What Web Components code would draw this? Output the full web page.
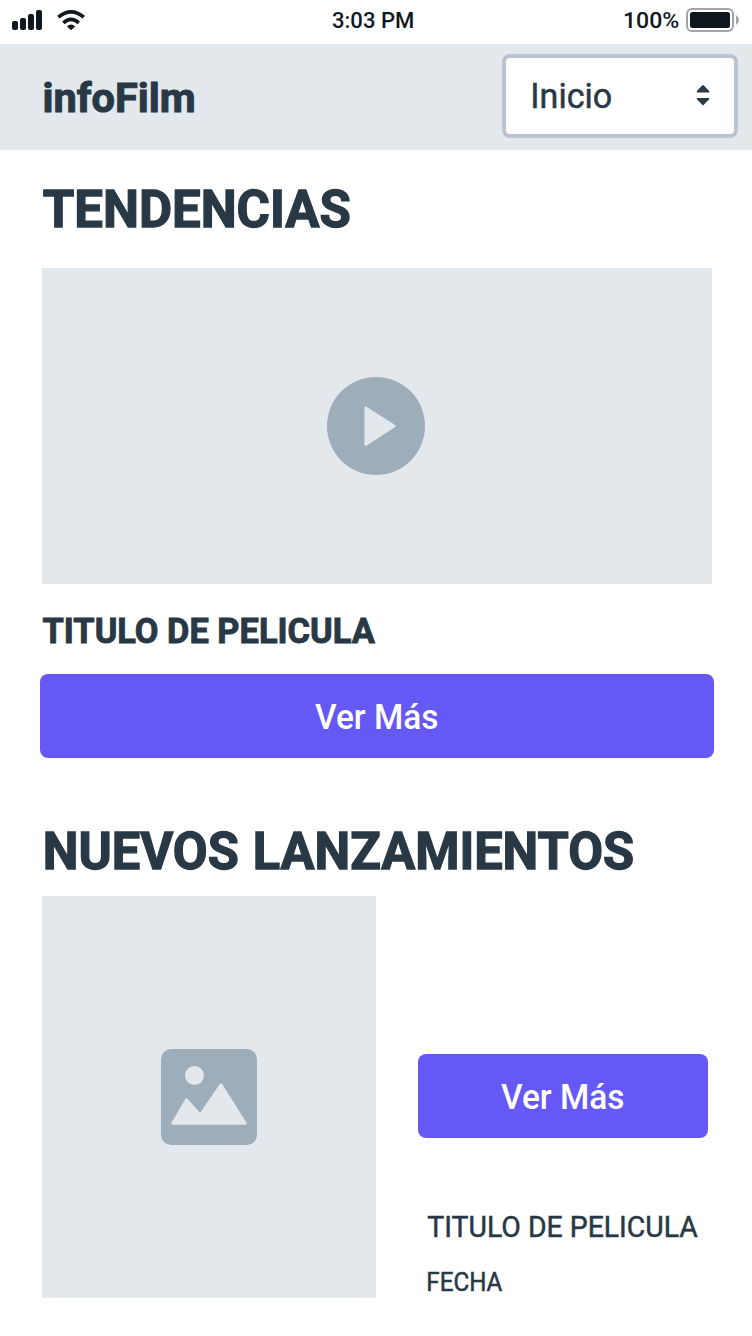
<!DOCTYPE html>
<html lang="es">
<head>
<meta charset="utf-8">
<title>infoFilm</title>
<style>
html,body{margin:0;background:#fff}
body{width:752px;height:1336px;overflow:hidden;font-family:Roboto,"Liberation Sans",sans-serif;color:#293845}
</style>
</head>
<body>
<info-film-app></info-film-app>
<script>
const define = (name, html) => customElements.define(name, class extends HTMLElement {
  constructor() {
    super();
    const t = document.createElement('template');
    t.innerHTML = html;
    this.attachShadow({mode: 'open'}).append(t.content.cloneNode(true));
  }
});

/* A label condensed to a given ink width; its box runs from cap top to baseline. */
customElements.define('fit-label', class extends HTMLElement {
  constructor() {
    super();
    this.attachShadow({mode: 'open'}).innerHTML = `<style>
      :host{display:block;flex:none;white-space:nowrap}
      span{display:block;width:max-content;transform-origin:0 50%}
    </style><span><slot></slot></span>`;
  }
  connectedCallback() {
    const size = +this.getAttribute('size'), weight = this.getAttribute('weight') || 400;
    const stroke = +this.getAttribute('stroke') || 0, gap = (+this.getAttribute('gap') || 0) + 'px';
    const width = +this.getAttribute('width'), cap = Math.round(size * .711);
    const ctx = document.createElement('canvas').getContext('2d');
    ctx.font = `${weight} ${size}px Roboto, "Liberation Sans", sans-serif`;
    ctx.wordSpacing = gap;
    const m = ctx.measureText(this.textContent);
    const k = (width - stroke) / (m.actualBoundingBoxRight + m.actualBoundingBoxLeft);
    this.style.cssText = `width:${width}px;height:${cap}px;font-size:${size}px;font-weight:${weight};line-height:${cap}px;word-spacing:${gap}`;
    const span = this.shadowRoot.querySelector('span');
    span.style.transform = `translate(${m.actualBoundingBoxLeft * k + stroke / 2}px, .0137em) scaleX(${k})`;
    if (stroke) span.style.webkitTextStroke = `${stroke}px currentColor`;
  }
});

define('status-bar', `<style>
  :host{display:grid;grid-template-columns:1fr auto 1fr;height:44px;color:#0f181f;box-sizing:border-box;padding:0 12px}
  div{display:flex;align-items:flex-start}
  .time{padding-top:12px;margin:0 3px 0 -3px}
  .right{justify-content:flex-end}
  .right fit-label{margin:12px 7.3px 0 0}
  svg{display:block;flex:none}
</style>
<div><svg width="76" height="32" viewBox="12 0 76 32" fill="currentColor">
  <rect x="12" y="21" width="6" height="9" rx="2"/><rect x="20" y="18" width="6" height="12" rx="2"/><rect x="28" y="14" width="6" height="16" rx="2"/><rect x="36" y="10" width="6" height="20" rx="2"/>
  <g fill="none" stroke="currentColor" stroke-width="3.6"><path d="M58.4 17.2Q71 6.4 83.8 17.2"/><path d="M63.4 22.8Q71 16 78.8 22.8"/></g>
  <path d="M67 26.4Q71 22.8 75.2 26.4L71.1 30.2Z"/></svg></div>
<div class="time"><fit-label size="22.5" weight="500" width="81.7">3:03 PM</fit-label></div>
<div class="right"><fit-label size="22.5" weight="500" width="54.7">100%</fit-label>
<svg width="54" height="34" viewBox="686 0 54 34"><rect x="687" y="9" width="46" height="22" rx="5" fill="none" stroke="#a0a4a8" stroke-width="2"/><rect x="690" y="12" width="40" height="16" rx="2.5" fill="#0f181f"/><path d="M736 15Q742 20 736 25Z" fill="#a0a4a8"/></svg></div>`);

define('nav-select', `<style>
  :host{display:flex;box-sizing:border-box;width:236px;height:84px;border:4px solid #bac4d0;border-radius:8px;background:#fff;justify-content:space-between;padding:26px 24px 0 26.6px}
  svg{display:block;margin-top:1px}
</style><slot></slot><svg width="14" height="22" viewBox="0 0 14 22" fill="#293845"><path d="M1.3 7.4Q.2 7.2 1.1 5.8L6.2 .4Q7 -.3 7.8 .4L12.9 5.8Q13.8 7.2 12.7 7.4ZM1.3 13Q.2 13.2 1.1 14.6L6.2 19.8Q7 20.5 7.8 19.8L12.9 14.6Q13.8 13.2 12.7 13Z"/></svg>`);

define('top-nav', `<style>
  :host{display:flex;justify-content:space-between;box-sizing:border-box;height:106px;background:#e2e8ec;padding:10px 14px 0 44px}
  .brand{padding-top:29px;margin-left:-.5px}
</style><div class="brand"><slot></slot></div>
<nav-select><fit-label size="35" width="78.5" stroke=".5">Inicio</fit-label></nav-select>`);

define('media-box', `<style>
  :host{display:flex;align-items:center;justify-content:center;background:#e2e8ec;flex:none}
</style><slot></slot>`);

define('play-icon', `<style>:host,svg{display:block}:host{margin-right:2px}</style>
<svg width="98" height="98" viewBox="0 0 98 98"><circle cx="49" cy="49" r="49" fill="#9eadba"/><path d="M38.7 30.8L67.5 49L38.7 67.6Z" fill="#e2e8ec" stroke="#e2e8ec" stroke-width="2.5" stroke-linejoin="round"/></svg>`);

define('image-icon', `<style>:host,svg{display:block}</style>
<svg width="96" height="96" viewBox="0 0 96 96"><rect width="96" height="96" rx="10" fill="#9eadba"/><g fill="#e2e8ec"><circle cx="33.5" cy="26.5" r="9.5"/><path d="M11.5 74.5L25.5 50.6L39.3 65.8L60 35.5L84.5 74.5Z" stroke="#e2e8ec" stroke-width="2.5" stroke-linejoin="round"/></g></svg>`);

define('primary-button', `<style>
  :host{display:flex;align-items:flex-start;justify-content:center;box-sizing:border-box;height:84px;padding:31px 1px 0 0;border-radius:8px;background:#6558f5;color:#fff}
</style><fit-label size="35" weight="500" width="122.6">Ver Más</fit-label>`);

define('trend-section', `<style>
  :host{display:block;padding:40px 38px 0 40px}
  .h{margin-left:2.5px}
  media-box{width:670px;height:316px;margin:41px 0 35px 2px}
  .t{margin:0 0 30px 2.4px}
  primary-button{width:674px}
</style>
<fit-label class="h" size="52.5" weight="700" width="307.3" stroke="1.3">TENDENCIAS</fit-label>
<media-box><play-icon></play-icon></media-box>
<fit-label class="t" size="35" weight="700" width="333.7" stroke=".9">TITULO DE PELICULA</fit-label>
<primary-button></primary-button>`);

define('release-section', `<style>
  :host{display:block;padding:74px 42px 0}
  .h{margin-left:2.8px}
  .row{display:flex;gap:42px;margin-top:27px}
  media-box{width:334px;height:402px}
  .info{padding-top:158px}
  primary-button{width:290px}
  .t{margin:79px 0 0 8.5px}
  .d{margin:36px 0 0 10.2px}
</style>
<fit-label class="h" size="52.5" weight="700" width="588.5" stroke="1.3" gap="1.5">NUEVOS LANZAMIENTOS</fit-label>
<div class="row"><media-box><image-icon></image-icon></media-box>
<div class="info"><primary-button></primary-button>
<fit-label class="t" size="29" width="271.2" stroke=".5">TITULO DE PELICULA</fit-label>
<fit-label class="d" size="25" width="74.3" stroke=".5">FECHA</fit-label></div></div>`);

define('info-film-app', `<style>:host{display:block}</style>
<status-bar></status-bar>
<top-nav><fit-label size="40.5" weight="700" width="150" stroke="1">infoFilm</fit-label></top-nav>
<main><trend-section></trend-section><release-section></release-section></main>`);
</script>
</body>
</html>
